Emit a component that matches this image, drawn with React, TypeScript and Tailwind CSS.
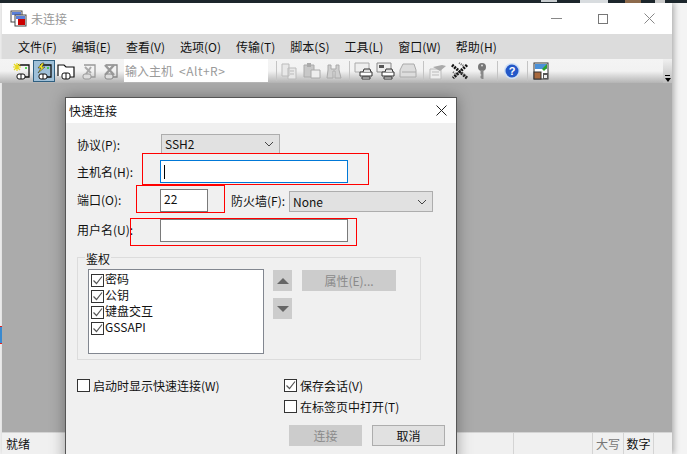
import { ReactNode } from "react";

const font = "font-['Noto_Sans_CJK_SC','Noto_Sans',sans-serif]";

const menus = ["文件(F)", "编辑(E)", "查看(V)", "选项(O)", "传输(T)", "脚本(S)", "工具(L)", "窗口(W)", "帮助(H)"];

function Terminal({ children, active }: { children?: ReactNode; active?: boolean }) {
  return (
    <span className={`flex h-[22px] w-[22px] items-center justify-center ${active ? "border border-[#2f5f80] bg-[#9fc0d8]" : ""}`}>
      <svg width="18" height="18" viewBox="0 0 18 18" fill="none">
        {children}
      </svg>
    </span>
  );
}

function Grey({ children }: { children: ReactNode }) {
  return (
    <span className="flex w-[22px] justify-center">
      <svg width="20" height="18" viewBox="0 0 20 18" fill="none">
        {children}
      </svg>
    </span>
  );
}

function Sep({ first }: { first?: boolean }) {
  return <span className={`h-[20px] w-px bg-[#c4c4c4] ${first ? "ml-[8px] mr-[2px]" : "ml-[4px] mr-[3px]"}`} />;
}

function Toolbar() {
  return (
    <div className="flex h-[24px] items-center bg-gradient-to-b from-[#f4f4f4] via-[#f2f2f2] to-[#b4b4b4] pl-[11px]">
      <Terminal>
        <path d="M5 3h11v12H4" stroke="#111" strokeWidth="1.3" />
        <path d="M12 6h2" stroke="#2c2" strokeWidth="1.5" />
        <path d="M4 1v8M0 5h8M1 2l6 6M7 2l-6 6" stroke="#e8d820" strokeWidth="1.2" />
        <rect x="4" y="12" width="8" height="5" rx="2" fill="#fff" stroke="#111" />
        <path d="M8 12v5" stroke="#111" />
      </Terminal>
      <Terminal active>
        <path d="M5 3h11v12H4" stroke="#111" strokeWidth="1.3" />
        <path d="M12 6h2" stroke="#2c2" strokeWidth="1.5" />
        <path d="M7 1L3 6h3L3 11l7-6H7l2-4z" fill="#f5e626" stroke="#222" strokeWidth=".5" />
        <rect x="4" y="12" width="8" height="5" rx="2" fill="#fff" stroke="#111" />
        <path d="M8 12v5" stroke="#111" />
      </Terminal>
      <Terminal>
        <path d="M1 14V3h6l2 2h8v10H12" stroke="#111" strokeWidth="1.2" fill="#fff" />
        <rect x="5" y="11" width="8" height="6" rx="2" fill="#fff" stroke="#111" />
        <path d="M9 11v6" stroke="#111" />
      </Terminal>
      <Terminal>
        <path d="M5 3h11v12H4" stroke="#999" strokeWidth="1.3" />
        <path d="M6 5l6 6M12 5l-5 7" stroke="#aaa" strokeWidth="2" />
        <rect x="4" y="12" width="8" height="5" rx="2" fill="#ddd" stroke="#999" />
      </Terminal>
      <Terminal>
        <path d="M5 3h11v12H4" stroke="#888" strokeWidth="1.3" />
        <path d="M4 3l9 10M13 3L4 13" stroke="#999" strokeWidth="2.4" />
        <rect x="4" y="12" width="8" height="5" rx="2" fill="#ddd" stroke="#888" />
      </Terminal>
      <div className={`ml-[3px] flex h-[23px] w-[144px] self-start items-center bg-white pl-[1px] text-[12px] text-[#9a9a9a] ${font}`}>
        <span>输入主机</span>
        <span className="ml-[6px] tracking-[0.5px]">&lt;Alt+R&gt;</span>
      </div>
      <Sep first />
      <Grey>
        <path d="M2 2h7v12H2zM8 6h8v11H8z" fill="#e8e8e8" stroke="#bbb" />
        <path d="M10 9h4M10 12h4" stroke="#bbb" />
      </Grey>
      <Grey>
        <path d="M2 3h10v12H2z" fill="#c8c8c8" stroke="#aaa" />
        <path d="M5 1h4v4H5z" fill="#aaa" />
        <path d="M9 8h9v8H9z" fill="#eee" stroke="#aaa" />
      </Grey>
      <Grey>
        <path d="M4 3h3v4h5V3h3v5l2 8h-6V9H9v7H3l1-8z" fill="#cfcfcf" stroke="#aaa" />
      </Grey>
      <Sep />
      <Grey>
        <path d="M1 1h14v9H1z" fill="#eee" stroke="#aaa" />
        <path d="M6 10h12v4H6zM8 15h8v2H8z" fill="#fff" stroke="#333" />
        <path d="M9 10l1-3h6l1 3" fill="#ddd" stroke="#333" />
      </Grey>
      <Grey>
        <path d="M1 1h14v9H1z" fill="#eee" stroke="#888" />
        <path d="M3 3h5v3H3z" fill="#555" />
        <path d="M6 10h12v4H6zM8 15h8v2H8z" fill="#fff" stroke="#333" />
        <path d="M9 10l1-3h6l1 3" fill="#ddd" stroke="#333" />
      </Grey>
      <Grey>
        <path d="M5 2h11l2 6v7H2V8z" fill="#ddd" stroke="#aaa" />
        <path d="M4 10h14" stroke="#aaa" />
      </Grey>
      <Sep />
      <Grey>
        <path d="M2 7h11v10H2z" fill="#eee" stroke="#bbb" />
        <path d="M5 5l9-2 4 1-6 5z" fill="#aaa" />
        <path d="M4 10h7M4 13h7" stroke="#bbb" />
      </Grey>
      <Grey>
        <path d="M2 3l15 13M17 3L3 16" stroke="#111" strokeWidth="3" strokeDasharray="2 1" />
        <path d="M9 1l5 3M3 10l4 3M12 11l5 4" stroke="#666" strokeWidth="2" strokeDasharray="1 1" />
      </Grey>
      <Grey>
        <circle cx="10" cy="5" r="4" fill="#777" />
        <path d="M8.500 8h3v9H10l-1.500-1v-2l1-1-1-1z" fill="#888" />
        <circle cx="10" cy="3.500" r="1" fill="#ddd" />
      </Grey>
      <Sep />
      <span className="flex w-[22px] justify-center">
        <svg width="18" height="18" viewBox="0 0 18 18">
          <circle cx="9" cy="9" r="8" fill="#cfe0f5" />
          <circle cx="9" cy="9" r="6.500" fill="#2458c8" />
          <text x="9" y="13" textAnchor="middle" fontSize="11" fontWeight="700" fill="#fff" fontFamily="Liberation Sans">?</text>
        </svg>
      </span>
      <span className="ml-[4px] mr-[2px] h-[20px] w-px bg-[#c4c4c4]" />
      <span className="flex w-[22px] justify-center">
        <svg width="16" height="18" viewBox="0 0 16 18">
          <rect x="1" y="1" width="14" height="16" fill="#fff" stroke="#333" />
          <rect x="2" y="2" width="12" height="5" fill="#4a90d8" />
          <path d="M9 7l5-5v4l-3 3z" fill="#2ca02c" />
          <rect x="1" y="10" width="7" height="7" fill="#a8683c" stroke="#333" />
          <rect x="10" y="11" width="5" height="6" fill="#555" />
          <rect x="11" y="13" width="3" height="3" fill="#eee" />
        </svg>
      </span>
      <div className="relative ml-auto h-full w-[9px] bg-gradient-to-b from-[#f0f0f0] to-[#bdbdbd]">
        <span className="absolute bottom-[7px] left-[2px] h-px w-[5px] bg-black" />
        <span className="absolute bottom-[1px] left-[2px] h-0 w-0 border-x-[3px] border-t-[4px] border-x-transparent border-t-black" />
      </div>
    </div>
  );
}

function Check({ on }: { on?: boolean }) {
  return (
    <span className="flex h-[13px] w-[13px] shrink-0 items-center justify-center border border-[#333] bg-white">
      {on && (
        <svg width="11" height="11" viewBox="0 0 11 11" fill="none">
          <path d="M1.500 5.500l3 3 5.500-7" stroke="#555" strokeWidth="1.2" />
        </svg>
      )}
    </span>
  );
}

function Combo({ value, className }: { value: string; className: string }) {
  return (
    <div className={`flex items-center justify-between border border-[#adadad] bg-[#e1e1e1] pl-[3px] pr-[5px] ${className}`}>
      <span>{value}</span>
      <svg width="10" height="6" viewBox="0 0 10 6" fill="none">
        <path d="M1 1l4 4 4-4" stroke="#444" />
      </svg>
    </div>
  );
}

function Dialog() {
  return (
    <div className={`absolute left-[65px] top-[97px] h-[370px] w-[392px] border border-[#555] bg-[#f0f0f0] text-[12px] leading-[16px] text-[#111] shadow-[0_0_14px_rgba(0,0,0,0.35)] ${font}`}>
      <div className="flex h-[25px] items-center justify-between bg-white pl-[3px] pr-[9px]">
        <span>快速连接</span>
        <svg width="11" height="11" viewBox="0 0 11 11" fill="none">
          <path d="M.5.5l10 10M10.500.5l-10 10" stroke="#222" />
        </svg>
      </div>
      <div className="pl-[11px]">
        <div className="mt-[11px] flex h-[20px] items-center">
          <span className="w-[84px] pt-[1px]">协议(P):</span>
          <Combo value="SSH2" className="h-[20px] w-[119px]" />
        </div>
        <div className="mt-[6px] flex h-[23px] items-center">
          <span className="w-[83px]">主机名(H):</span>
          <div className="flex h-[23px] w-[188px] items-center border border-[#0078d7] bg-white pl-[3px]">
            <span className="h-[14px] w-px bg-black" />
          </div>
        </div>
        <div className="mt-[6px] flex h-[23px] items-center">
          <span className="w-[83px] pb-[2px]">端口(O):</span>
          <div className="flex h-[23px] w-[48px] items-center border border-[#7a7a7a] bg-white pb-[3px] pl-[3px]">22</div>
          <span className="ml-[23px] w-[58px]">防火墙(F):</span>
          <Combo value="None" className="h-[21px] w-[144px] self-end" />
        </div>
        <div className="mt-[7px] flex h-[23px] items-center">
          <span className="w-[83px] pb-[2px]">用户名(U):</span>
          <div className="h-[23px] w-[188px] border border-[#7a7a7a] bg-white" />
        </div>
        <fieldset className="relative mt-[15px] flex h-[103px] w-[344px] border border-[#dcdcdc] pl-[10px] pt-[11px]">
          <legend className="absolute -top-[7px] left-[7px] bg-[#f0f0f0] px-px">鉴权</legend>
          <div className="h-[85px] w-[176px] border border-[#828790] bg-white pl-[2px] pt-[2px]">
            {["密码", "公钥", "键盘交互", "GSSAPI"].map((item) => (
              <div key={item} className="flex h-[16px] items-center gap-[1px]">
                <Check on />
                <span className="pb-[2px]">{item}</span>
              </div>
            ))}
          </div>
          <div className="ml-[9px] flex flex-col gap-[7px] pt-[1px]">
            <div className="flex h-[21px] w-[19px] items-center justify-center bg-[#cccccc]">
              <span className="h-0 w-0 border-x-[6px] border-b-[6px] border-x-transparent border-b-[#666]" />
            </div>
            <div className="flex h-[21px] w-[19px] items-center justify-center bg-[#cccccc]">
              <span className="h-0 w-0 border-x-[6px] border-t-[6px] border-x-transparent border-t-[#666]" />
            </div>
          </div>
          <div className="ml-[10px] mt-[1px] flex h-[21px] w-[94px] items-center justify-center bg-[#cccccc] text-[#8a8a8a]">属性(E)...</div>
        </fieldset>
        <div className="mt-[19px] flex items-start">
          <div className="flex h-[13px] w-[207px] items-center gap-[3px]">
            <Check />
            <span>启动时显示快速连接(W)</span>
          </div>
          <div className="flex flex-col gap-[8px]">
            <div className="flex h-[13px] items-center gap-[3px]">
              <Check on />
              <span>保存会话(V)</span>
            </div>
            <div className="flex h-[13px] items-center gap-[3px]">
              <Check />
              <span>在标签页中打开(T)</span>
            </div>
          </div>
        </div>
        <div className="ml-[212px] mt-[12px] flex gap-[10px]">
          <div className="flex h-[21px] w-[73px] shrink-0 items-center justify-center bg-[#cccccc] text-[#8a8a8a]">连接</div>
          <div className="flex h-[21px] w-[73px] shrink-0 items-center justify-center border border-[#adadad] bg-[#e1e1e1]">取消</div>
        </div>
      </div>
    </div>
  );
}

export default function App() {
  return (
    <div className="relative h-[454px] w-[687px] overflow-hidden bg-[#f4f4f4]">
      <div className="relative h-[3px] bg-[#1c262c]">
        <span className="absolute left-[541px] top-0 h-[2px] w-[16px] bg-[#c8cdd0]" />
        <span className="absolute left-[580px] top-0 h-[3px] w-[28px] bg-[#d8dcdf]" />
        <span className="absolute left-[625px] top-0 h-[3px] w-[16px] bg-[#8c6a4c]" />
        <span className="absolute left-[655px] top-0 h-[3px] w-[10px] bg-[#c9c9c9]" />
      </div>
      <div className="ml-[2px] flex h-[451px] w-[670px] flex-col shadow-[2px_0_6px_rgba(0,0,0,0.3)]">
        <div className={`flex h-[31px] items-center bg-white pl-[8px] ${font}`}>
          <svg width="17" height="17" viewBox="0 0 17 17">
            <rect x="1" y="1" width="11" height="11" fill="#fff" stroke="#444" />
            <rect x="2" y="2" width="9" height="3" fill="#5a7fd8" />
            <rect x="5" y="5" width="11" height="11" fill="#fff" stroke="#444" />
            <rect x="6" y="6" width="9" height="3" fill="#5a7fd8" />
            <rect x="8" y="9" width="7" height="6" fill="#c00" />
          </svg>
          <span className="ml-[4px] text-[12px] text-[#999]">未连接 -</span>
          <div className="ml-auto flex items-center">
            <span className="h-px w-[11px] bg-[#888]" />
            <span className="ml-[36px] h-[10px] w-[10px] border border-[#777]" />
            <svg className="ml-[36px] mr-[17px]" width="11" height="11" viewBox="0 0 11 11" fill="none">
              <path d="M.5.5l10 10M10.500.5l-10 10" stroke="#888" />
            </svg>
          </div>
        </div>
        <div className={`flex h-[25px] items-center bg-[#dcdcdc] pl-[16px] text-[12px] text-[#111] ${font}`}>
          {menus.map((menu) => (
            <span key={menu} className="mr-[15px]">
              {menu}
            </span>
          ))}
        </div>
        <div className="-ml-[2px]">
          <Toolbar />
        </div>
        <div className="flex-1 bg-[#ababab]" />
        <div className={`flex h-[22px] items-center border-t border-[#d4d4d4] bg-[#f0f0f0] text-[12px] text-[#111] ${font}`}>
          <span className="ml-[4px]">就绪</span>
          <span className="ml-auto h-full w-px bg-[#d4d4d4]" />
          <span className="ml-[78px] h-full w-px bg-[#d4d4d4]" />
          <span className="flex w-[30px] justify-center text-[#777]">大写</span>
          <span className="h-full w-px bg-[#d4d4d4]" />
          <span className="flex w-[29px] justify-center">数字</span>
          <span className="h-full w-px bg-[#d4d4d4]" />
          <span className="w-[18px]" />
        </div>
      </div>
      <Dialog />
      <div className="absolute left-0 top-[326px] h-[18px] w-[2px] border-y border-[#e02020] bg-[#3a8ad0]" />
      <div className="absolute left-[142px] top-[153px] h-[32px] w-[227px] border border-[#f00]" />
      <div className="absolute left-[136px] top-[185px] h-[28px] w-[89px] border border-[#f00]" />
      <div className="absolute left-[130px] top-[218px] h-[28px] w-[227px] border border-[#f00]" />
    </div>
  );
}
